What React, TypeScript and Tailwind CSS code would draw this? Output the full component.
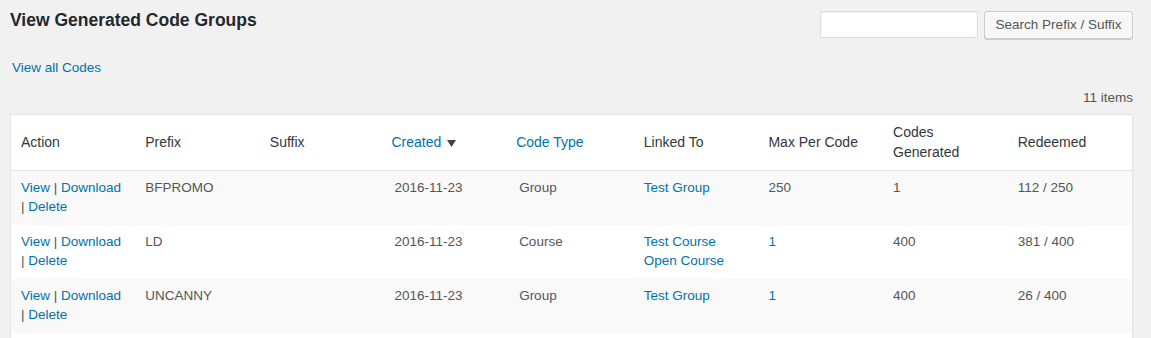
import { Fragment } from 'react';

type Row = {
  prefix: string;
  created: string;
  type: string;
  linked: string[];
  max: string;
  maxLink: boolean;
  generated: string;
  redeemed: string;
};

const rows: Row[] = [
  { prefix: 'BFPROMO', created: '2016-11-23', type: 'Group', linked: ['Test Group'], max: '250', maxLink: false, generated: '1', redeemed: '112 / 250' },
  { prefix: 'LD', created: '2016-11-23', type: 'Course', linked: ['Test Course', 'Open Course'], max: '1', maxLink: true, generated: '400', redeemed: '381 / 400' },
  { prefix: 'UNCANNY', created: '2016-11-23', type: 'Group', linked: ['Test Group'], max: '1', maxLink: true, generated: '400', redeemed: '26 / 400' },
  { prefix: '', created: '', type: '', linked: [], max: '', maxLink: false, generated: '', redeemed: '' },
];

const font = { fontFamily: '"Liberation Sans", Arial, sans-serif' };

const td = 'px-[10px] pt-[7px] pb-[9px] align-top leading-[19px]';

export default function App() {
  return (
    <div
      className="min-h-[338px] bg-[#f1f1f1] pl-[10px] pr-[18px] text-[13.5px] text-[#444]"
      style={font}
    >
      <div className="flex items-start justify-between pt-[11px]">
        <h1 className="pt-[1px] text-[17.5px] font-bold leading-[17px] text-[#23282d]">
          View Generated Code Groups
        </h1>
        <div className="flex items-start gap-[6px]">
          <input
            type="text"
            className="h-[27px] w-[158px] border border-[#ddd] bg-white shadow-[inset_0_1px_2px_rgba(0,0,0,0.07)] outline-none"
          />
          <button className="h-[28px] w-[149px] rounded-[3px] border border-[#ccc] bg-[#f7f7f7] text-[13.5px] text-[#555] shadow-[0_1px_0_#ccc]">
            Search Prefix / Suffix
          </button>
        </div>
      </div>

      <div className="pl-[2px] pt-[20px] leading-[18px]">
        <a className="text-[#0073aa]">View all Codes</a>
      </div>

      <div className="pt-[12px] pr-[-1px] text-right leading-[18px] text-[#555]">11 items</div>

      <table className="mt-[7px] w-full table-fixed border-collapse border border-[#e5e5e5] bg-white shadow-[0_1px_1px_rgba(0,0,0,0.04)]">
        <thead>
          <tr className="border-b border-[#e1e1e1] text-left text-[14px] leading-[19.6px] text-[#32373c]">
            <th className="px-[10px] py-[8px] font-normal">Action</th>
            <th className="px-[10px] py-[8px] font-normal">Prefix</th>
            <th className="px-[10px] py-[8px] font-normal">Suffix</th>
            <th className="py-[8px] pl-[7px] pr-[10px] font-normal">
              <a className="inline-flex items-center text-[#0073aa]">
                Created
                <svg className="ml-[6px] mt-[1px] h-[7px] w-[9px]" viewBox="0 0 9 7">
                  <path d="M0 0 L9 0 L4.5 7 Z" fill="#444" />
                </svg>
              </a>
            </th>
            <th className="py-[8px] pl-[7px] pr-[10px] font-normal">
              <a className="text-[#0073aa]">Code Type</a>
            </th>
            <th className="px-[10px] py-[8px] font-normal">Linked To</th>
            <th className="px-[10px] py-[8px] font-normal">Max Per Code</th>
            <th className="px-[10px] py-[8px] font-normal">Codes Generated</th>
            <th className="px-[10px] py-[8px] font-normal">Redeemed</th>
          </tr>
        </thead>
        <tbody>
          {rows.map((r, i) => (
            <tr key={i} className={i % 2 === 0 ? 'bg-[#f9f9f9]' : 'bg-white'}>
              {r.prefix ? (
                <>
                  <td className={`${td} text-[#555]`}>
                    <a className="text-[#0073aa]">View</a> | <a className="text-[#0073aa]">Download</a>{' '}
                    <span className="whitespace-nowrap">
                      | <a className="text-[#0073aa]">Delete</a>
                    </span>
                  </td>
                  <td className={`${td} text-[#555]`}>{r.prefix}</td>
                  <td className={td}></td>
                  <td className={`${td} text-[#555]`}>{r.created}</td>
                  <td className={`${td} text-[#555]`}>{r.type}</td>
                  <td className={td}>
                    {r.linked.map((l, j) => (
                      <Fragment key={j}>
                        {j > 0 && <br />}
                        <a className="text-[#0073aa]">{l}</a>
                      </Fragment>
                    ))}
                  </td>
                  <td className={`${td} text-[#555]`}>
                    {r.maxLink ? <a className="text-[#0073aa]">{r.max}</a> : r.max}
                  </td>
                  <td className={`${td} text-[#555]`}>{r.generated}</td>
                  <td className={`${td} text-[#555]`}>{r.redeemed}</td>
                </>
              ) : (
                <td colSpan={9} className="h-[54px]"></td>
              )}
            </tr>
          ))}
        </tbody>
      </table>
    </div>
  );
}
